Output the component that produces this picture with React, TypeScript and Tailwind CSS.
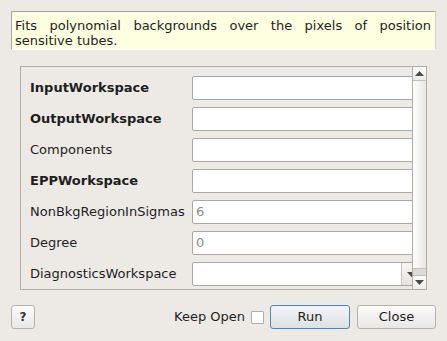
import React from "react";

const rows: { label: string; bold?: boolean; value?: string; combo?: boolean }[] = [
  { label: "InputWorkspace", bold: true },
  { label: "OutputWorkspace", bold: true },
  { label: "Components" },
  { label: "EPPWorkspace", bold: true },
  { label: "NonBkgRegionInSigmas", value: "6" },
  { label: "Degree", value: "0" },
  { label: "DiagnosticsWorkspace", combo: true },
];

function Tri({ down }: { down?: boolean }) {
  return (
    <svg width="9" height="5" viewBox="0 0 9 5">
      {down ? <polygon points="0,0 9,0 4.5,5" fill="#4a4a4a" /> : <polygon points="0,5 9,5 4.5,0" fill="#4a4a4a" />}
    </svg>
  );
}

export default function App() {
  return (
    <div
      className="w-[447px] h-[341px] bg-[#edeae6] flex flex-col text-[13px] text-[#1e1e1e] overflow-hidden"
      style={{ fontFamily: '"DejaVu Sans", sans-serif' }}
    >
      <div className="ml-[11px] mt-[11px] w-[425px] h-[39px] bg-[#fefee0] border-t border-l border-t-[#a9a6a1] border-l-[#a9a6a1] border-r border-r-[#d2cfca] border-b border-b-[#ffffff] pl-[3px] pr-[4px] pt-[6px] leading-[15px] text-justify">
        Fits polynomial backgrounds over the pixels of position sensitive tubes.
      </div>

      <div className="ml-[20px] mt-[16px] w-[407px] h-[224px] border border-[#b1ada8] flex">
        <div className="flex-1 overflow-hidden pt-[9px] pl-[9px] flex flex-col gap-[7px]">
          {rows.map((r) => (
            <div key={r.label} className="flex items-center h-[24px] shrink-0">
              <div className={`w-[162px] shrink-0 whitespace-nowrap ${r.bold ? "font-bold" : ""}`}>{r.label}</div>
              {r.combo ? (
                <div className="w-[230px] h-[24px] shrink-0 flex border border-[#aba7a2] rounded-[2px] bg-white">
                  <div className="w-[208px] h-full"></div>
                  <div className="w-[20px] h-full border-l border-[#c9c5c0] bg-gradient-to-b from-[#f7f6f5] to-[#e6e4e1] flex items-center pl-[5px]">
                    <Tri down />
                  </div>
                </div>
              ) : (
                <div className="w-[230px] h-[24px] shrink-0 border border-[#aba7a2] rounded-[2px] bg-white flex items-center pl-[3px] text-[#8c8c8c]">
                  {r.value ?? ""}
                </div>
              )}
            </div>
          ))}
        </div>
        <div className="w-[14px] shrink-0 border-l border-[#b1ada8] flex flex-col">
          <div className="h-[14px] border-b border-[#c4c0bb] bg-gradient-to-b from-[#fbfbfa] to-[#eeece9] flex items-center justify-center">
            <Tri />
          </div>
          <div className="h-[188px] bg-gradient-to-r from-[#ffffff] to-[#e9e7e4] border-b border-[#c4c0bb]"></div>
          <div className="flex-1 bg-[#dedad5]"></div>
          <div className="h-[14px] border-t border-[#c4c0bb] bg-gradient-to-b from-[#fbfbfa] to-[#eeece9] flex items-center justify-center">
            <Tri down />
          </div>
        </div>
      </div>

      <div className="mt-[15px] h-[24px] flex items-center pl-[11px] pr-[11px]">
        <button className="w-[24px] h-[24px] border border-[#b5b1ac] rounded-[3px] bg-gradient-to-b from-[#fbfbfa] to-[#e9e7e4] text-[12px] font-bold text-[#333] flex items-center justify-center">
          ?
        </button>
        <div className="flex-1"></div>
        <span className="whitespace-nowrap">Keep Open</span>
        <div className="ml-[6px] w-[13px] h-[13px] border border-[#b0aca7] bg-white rounded-[1px]"></div>
        <button className="ml-[6px] w-[80px] h-[24px] border border-[#4e86b4] rounded-[3px] bg-gradient-to-b from-[#f3f4f5] to-[#dde1e4] flex items-center justify-center">
          Run
        </button>
        <button className="ml-[7px] w-[79px] h-[24px] border border-[#b5b1ac] rounded-[3px] bg-gradient-to-b from-[#fbfbfa] to-[#e9e7e4] flex items-center justify-center">
          Close
        </button>
      </div>
    </div>
  );
}
